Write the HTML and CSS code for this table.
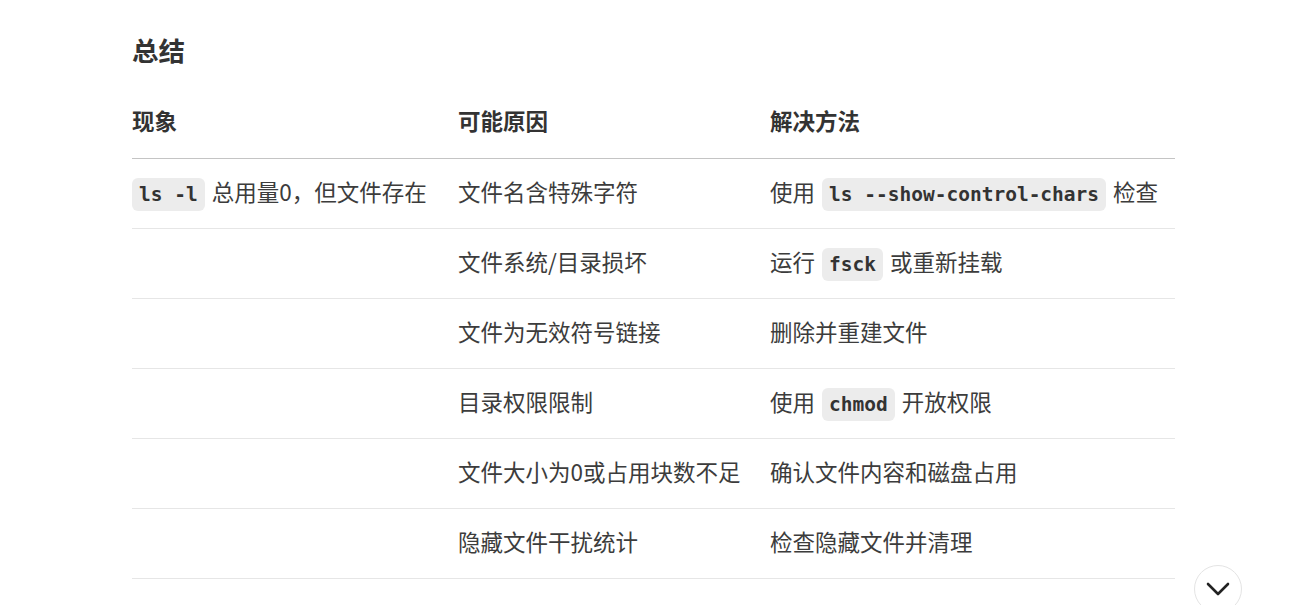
FILE: index.html
```html
<!DOCTYPE html>
<html lang="zh-CN">
<head>
<meta charset="utf-8">
<link rel="stylesheet" href="styles.css">
</head>
<body>
<main class="doc">
  <h2 class="title">总结</h2>
  <table class="summary">
    <thead>
      <tr><th class="c1">现象</th><th class="c2">可能原因</th><th class="c3">解决方法</th></tr>
    </thead>
    <tbody>
      <tr><td><code class="lead">ls -l</code> 总用量0，但文件存在</td><td>文件名含特殊字符</td><td>使用 <code>ls --show-control-chars</code> 检查</td></tr>
      <tr><td></td><td>文件系统/目录损坏</td><td>运行 <code>fsck</code> 或重新挂载</td></tr>
      <tr><td></td><td>文件为无效符号链接</td><td>删除并重建文件</td></tr>
      <tr><td></td><td>目录权限限制</td><td>使用 <code>chmod</code> 开放权限</td></tr>
      <tr><td></td><td>文件大小为0或占用块数不足</td><td>确认文件内容和磁盘占用</td></tr>
      <tr><td></td><td>隐藏文件干扰统计</td><td>检查隐藏文件并清理</td></tr>
    </tbody>
  </table>
</main>
<button class="scroll-down" aria-label="scroll down">
  <svg width="28" height="28" viewBox="0 0 28 28" fill="none" stroke="#222" stroke-width="2.6" stroke-linecap="round" stroke-linejoin="round"><path d="M4 9l10 10 10-10"/></svg>
</button>
</body>
</html>
```
FILE: styles.css
```css
html, body {
  margin: 0;
  padding: 0;
  background: #fff;
}
body {
  font-family: "Noto Sans CJK SC", "Noto Sans", sans-serif;
  color: #3c3c3c;
  overflow: hidden;
}
.doc {
  width: 1043px;
  margin-left: 132px;
  padding-top: 32px;
}
.title {
  margin: 0 0 20px 0;
  font-size: 26.5px;
  line-height: 36px;
  font-weight: 700;
  color: #333;
}
.summary {
  width: 100%;
  border-collapse: collapse;
  font-size: 22.5px;
}
.summary th, .summary td {
  text-align: left;
  padding: 14px 0 19px 0;
  line-height: 36px;
  vertical-align: middle;
  white-space: nowrap;
}
.summary th {
  font-weight: 700;
  color: #333;
  padding-bottom: 20px;
  border-bottom: 1px solid #c4c4c4;
}
.summary td {
  border-bottom: 1px solid #e6e6e6;
}
.summary .c1 { width: 326px; }
.summary .c2 { width: 312px; }
code {
  font-family: "DejaVu Sans Mono", "Liberation Mono", monospace;
  font-weight: 700;
  font-size: 19.5px;
  line-height: 1;
  background: #ececec;
  color: #333;
  border-radius: 6px;
  padding: 5px 7px;
  margin: 0 2px;
}
code.lead {
  margin-left: 0;
}
.scroll-down {
  position: absolute;
  left: 1194px;
  top: 565px;
  width: 48px;
  height: 48px;
  border-radius: 50%;
  border: 1px solid #e4e4e4;
  background: #fff;
  display: flex;
  align-items: center;
  justify-content: center;
  padding: 0;
}
```
